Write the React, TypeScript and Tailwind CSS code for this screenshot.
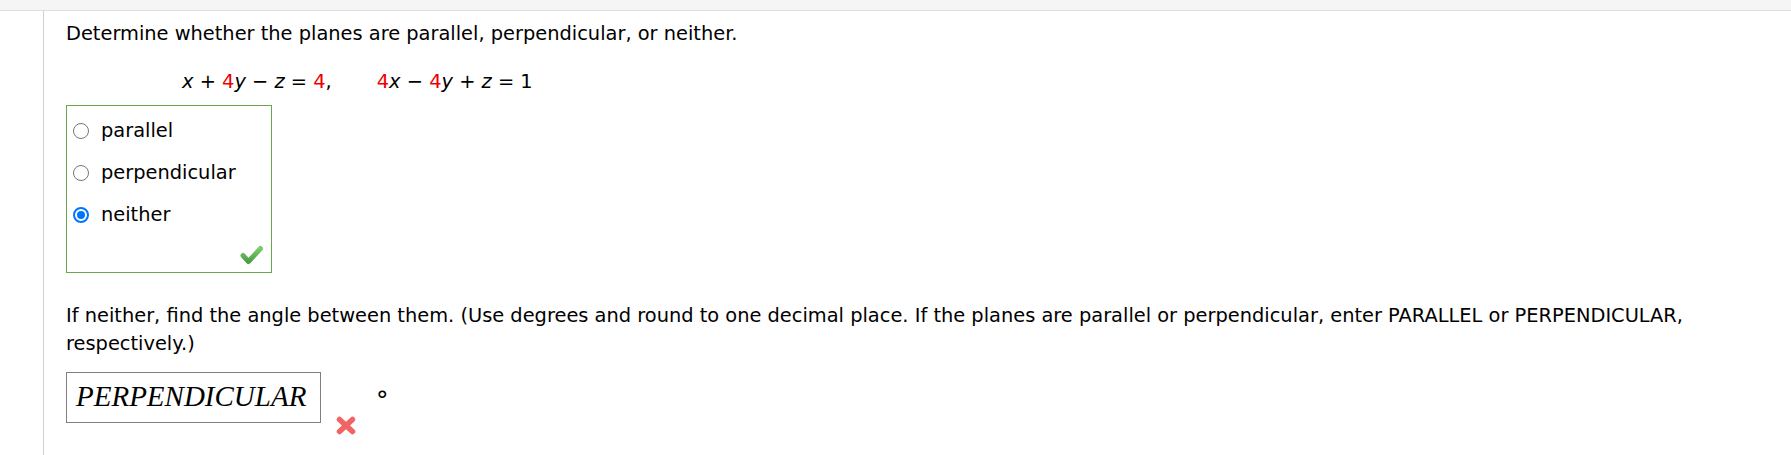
import React from "react";

const font = { fontFamily: '"DejaVu Sans", Verdana, sans-serif' };

function Radio({ checked }: { checked?: boolean }) {
  if (checked) {
    return (
      <span className="flex h-[16px] w-[16px] shrink-0 items-center justify-center rounded-full border-[2px] border-[#0075ff] bg-white">
        <span className="h-[8px] w-[8px] rounded-full bg-[#0075ff]" />
      </span>
    );
  }
  return <span className="h-[16px] w-[16px] shrink-0 rounded-full border border-[#767676] bg-white" />;
}

function CheckMark() {
  return (
    <svg width="23" height="20" viewBox="0 0 23 20">
      <defs>
        <linearGradient id="ok" x1="0" y1="0" x2="0" y2="1">
          <stop offset="0" stopColor="#7ccc6c" />
          <stop offset="1" stopColor="#4a9e48" />
        </linearGradient>
      </defs>
      <path
        d="M3 10.5 L8.5 16.5 L20.5 3.5"
        fill="none"
        stroke="url(#ok)"
        strokeWidth="5"
        strokeLinecap="round"
        strokeLinejoin="round"
      />
    </svg>
  );
}

function Cross() {
  return (
    <svg width="20" height="19" viewBox="0 0 20 19">
      <g stroke="#f26464" strokeWidth="5.5" strokeLinecap="round">
        <line x1="3.5" y1="3.5" x2="16.5" y2="15.5" />
        <line x1="16.5" y1="3.5" x2="3.5" y2="15.5" />
      </g>
    </svg>
  );
}

const red = "text-[#ee0000]";

export default function App() {
  const options = [
    { label: "parallel", checked: false },
    { label: "perpendicular", checked: false },
    { label: "neither", checked: true },
  ];

  return (
    <div className="min-h-[455px] bg-white text-black" style={font}>
      <div className="h-[11px] border-b border-[#dedede] bg-[#f5f5f5]" />
      <div className="ml-[43px] min-h-[444px] border-l border-[#d0d0d0] pl-[22px] pt-[9px] text-[19.4px] leading-[28px]">
        {/* question */}
        <p>Determine whether the planes are parallel, perpendicular, or neither.</p>
        <p className="mt-[20px] whitespace-nowrap pl-[116px]">
          <i>x</i> + <span className={red}>4</span>
          <i>y</i> − <i>z</i> = <span className={red}>4</span>,
          <span className="inline-block w-[45px]" />
          <span className={red}>4</span>
          <i>x</i> − <span className={red}>4</span>
          <i>y</i> + <i>z</i> = 1
        </p>

        {/* choices */}
        <div className="mt-[9px] flex h-[168px] w-[206px] flex-col border border-[#6aa84f] pt-[4px]">
          {options.map((o) => (
            <label key={o.label} className="flex h-[42px] items-center gap-[12px] pl-[6px]">
              <Radio checked={o.checked} />
              <span>{o.label}</span>
            </label>
          ))}
          <div className="mt-[9px] flex justify-end pr-[8px]">
            <CheckMark />
          </div>
        </div>

        {/* angle part */}
        <p className="mt-[29px] whitespace-nowrap">
          If neither, find the angle between them. (Use degrees and round to one decimal place. If the planes are
          parallel or perpendicular, enter PARALLEL or PERPENDICULAR,
          <br />
          respectively.)
        </p>
        <div className="mt-[14px] flex items-start">
          <div
            className="h-[51px] w-[255px] border border-[#808080] pl-[9px] text-[29px] italic leading-[47px]"
            style={{ fontFamily: '"Liberation Serif", "Times New Roman", serif' }}
          >
            PERPENDICULAR
          </div>
          <div className="ml-[15px] mt-[44px]">
            <Cross />
          </div>
          <span className="ml-[20px] mt-[15px] text-[25px] leading-[28px]">°</span>
        </div>
      </div>
    </div>
  );
}
